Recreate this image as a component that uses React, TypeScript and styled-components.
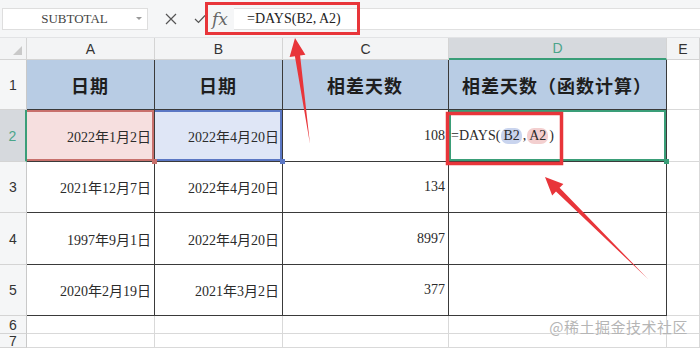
import styled, { createGlobalStyle, css } from 'styled-components'

const GlobalStyle = createGlobalStyle`
  html, body {
    margin: 0;
    padding: 0;
    background: #ffffff;
  }
  body {
    width: 700px;
    height: 348px;
    overflow: hidden;
    font-family: 'Liberation Serif', 'Noto Sans CJK SC', serif;
  }
`

const SERIF = `'Liberation Serif', 'Noto Sans CJK SC', serif`
const SANS = `'Liberation Sans', 'Noto Sans CJK SC', sans-serif`
const GREEN = '#3a9e78'
const DARK = '#3a3a3a'
const GRID = '#d9d9d9'

const Page = styled.div`
  position: relative;
  width: 700px;
  height: 348px;
  overflow: hidden;
`

const Toolbar = styled.div`
  height: 38px;
  box-sizing: border-box;
  display: flex;
  align-items: center;
  padding: 0 0 0 2px;
  background: #f5f6f7;
  border-bottom: 1px solid #e2e3e5;
`

const NameBox = styled.div`
  width: 146px;
  height: 22px;
  box-sizing: border-box;
  display: flex;
  align-items: center;
  background: #ffffff;
  border: 1px solid #dedede;
  font-family: ${SERIF};
  font-size: 13px;
  color: #444;
`

const NameText = styled.span`
  flex: 1;
  text-align: center;
  padding-left: 10px;
`

const Caret = styled.span`
  width: 0;
  height: 0;
  margin-right: 5px;
  border-left: 3px solid transparent;
  border-right: 3px solid transparent;
  border-top: 3px solid #999;
`

const ToolIcon = styled.span<{ $w: number }>`
  width: ${(p) => p.$w}px;
  display: flex;
  justify-content: center;
  align-items: center;
  color: #555;
`

const Fx = styled.span`
  width: 28px;
  text-align: center;
  font-family: 'DejaVu Serif', serif;
  font-style: italic;
  font-size: 17px;
  color: #666;
`

const FormulaInput = styled.div`
  flex: 1;
  height: 22px;
  box-sizing: border-box;
  display: flex;
  align-items: center;
  padding-left: 13px;
  background: #ffffff;
  border-top: 1px solid #e0e0e0;
  border-bottom: 1px solid #e0e0e0;
  font-family: ${SERIF};
  font-size: 14px;
  color: #222;
`

const Sheet = styled.div`
  display: grid;
  grid-template-columns: 27px 128px 128px 166px 218px 33px;
  grid-template-rows: 22px 50px 52px 51px 52px 51px 18px 14px;
`

const HeadCell = styled.div<{ $active?: boolean }>`
  box-sizing: border-box;
  display: flex;
  align-items: center;
  justify-content: center;
  background: ${(p) => (p.$active ? '#d6d9dd' : '#f3f4f5')};
  border-right: 1px solid #d4d4d4;
  border-bottom: ${(p) => (p.$active ? `2px solid ${GREEN}` : '1px solid #d4d4d4')};
  font-family: ${SANS};
  font-size: 14px;
  color: ${(p) => (p.$active ? '#4aa58a' : '#333')};
`

const Corner = styled(HeadCell)`
  position: relative;
  &::after {
    content: '';
    position: absolute;
    right: 4px;
    bottom: 4px;
    border-left: 9px solid transparent;
    border-bottom: 9px solid #c9c9c9;
  }
`

const RowHead = styled.div<{ $active?: boolean }>`
  box-sizing: border-box;
  display: flex;
  align-items: center;
  justify-content: center;
  background: ${(p) => (p.$active ? '#d6d9dd' : '#f5f6f7')};
  border-bottom: 1px solid #d4d4d4;
  border-right: ${(p) => (p.$active ? `2px solid ${GREEN}` : '1px solid #c9c9c9')};
  font-family: ${SANS};
  font-size: 14px;
  color: ${(p) => (p.$active ? '#4aa58a' : '#333')};
`

type Tone = 'plain' | 'header' | 'red' | 'blue' | 'active'

const toneStyles: Record<Tone, ReturnType<typeof css>> = {
  plain: css``,
  header: css`
    background: #b8cce4;
  `,
  red: css`
    background: #f6dfdf;
    box-shadow: inset 0 2px 0 #c8706c, inset 0 -2px 0 #c8706c, inset -2px 0 0 #c8706c;
  `,
  blue: css`
    background: #dfe6f6;
    box-shadow: inset 0 2px 0 #5b77c4, inset 0 -2px 0 #5b77c4, inset -2px 0 0 #5b77c4;
  `,
  active: css`
    box-shadow: inset 0 0 0 2px ${GREEN};
  `,
}

const handleColor: Partial<Record<Tone, string>> = {
  red: '#c8706c',
  blue: '#5b77c4',
  active: GREEN,
}

const Cell = styled.div<{ $tone?: Tone; $edge?: boolean; $align?: 'right' | 'center' | 'left' }>`
  position: relative;
  box-sizing: border-box;
  display: flex;
  align-items: center;
  justify-content: ${(p) =>
    p.$align === 'center' ? 'center' : p.$align === 'left' ? 'flex-start' : 'flex-end'};
  padding: 0 3px 0 2px;
  border-right: 1px solid ${(p) => (p.$edge ? DARK : GRID)};
  border-bottom: 1px solid ${(p) => (p.$edge ? DARK : GRID)};
  font-family: ${SERIF};
  font-size: 14px;
  color: #2b2b2b;
  white-space: nowrap;
  ${(p) => toneStyles[p.$tone ?? 'plain']}
  ${(p) =>
    p.$tone && handleColor[p.$tone]
      ? css`
          &::after {
            content: '';
            position: absolute;
            right: -3px;
            bottom: -3px;
            width: 5px;
            height: 5px;
            background: ${handleColor[p.$tone]};
            z-index: 2;
          }
        `
      : ''}
`

const HeaderText = styled.span`
  font-family: 'Noto Sans CJK SC', sans-serif;
  font-weight: 700;
  font-size: 18px;
  color: #1e1e1e;
  letter-spacing: 1px;
`

const Formula = styled.span`
  display: flex;
  align-items: center;
  gap: 1px;
`

const Ref = styled.span<{ $color: string }>`
  padding: 0 2px;
  border-radius: 7px;
  background: ${(p) => p.$color};
`

const Annotations = styled.svg`
  position: absolute;
  left: 0;
  top: 0;
  pointer-events: none;
`

const Watermark = styled.div`
  position: absolute;
  right: 12px;
  bottom: 11px;
  font-family: 'Noto Sans CJK SC', sans-serif;
  font-size: 15px;
  color: #b5b5b5;
  letter-spacing: 0.5px;
  text-shadow: 0 0 1px #fff;
`

function arrowPoints(tx: number, ty: number, hx: number, hy: number) {
  const dx = hx - tx
  const dy = hy - ty
  const len = Math.hypot(dx, dy)
  const ux = dx / len
  const uy = dy / len
  const nx = -uy
  const ny = ux
  const headLen = 18
  const headW = 8
  const shaftW = 2.6
  const bx = hx - ux * headLen
  const by = hy - uy * headLen
  const pts = [
    [tx, ty],
    [bx + nx * shaftW, by + ny * shaftW],
    [bx + nx * headW, by + ny * headW],
    [hx, hy],
    [bx - nx * headW, by - ny * headW],
    [bx - nx * shaftW, by - ny * shaftW],
  ]
  return pts.map((p) => p.map((v) => v.toFixed(1)).join(',')).join(' ')
}

const dates = [
  ['2021年12月7日', '2022年4月20日', '134'],
  ['1997年9月1日', '2022年4月20日', '8997'],
  ['2020年2月19日', '2021年3月2日', '377'],
]

export default function App() {
  return (
    <Page>
      <GlobalStyle />
      <Toolbar>
        <NameBox>
          <NameText>SUBTOTAL</NameText>
          <Caret />
        </NameBox>
        <ToolIcon $w={46}>
          <svg width="12" height="12" viewBox="0 0 12 12">
            <path d="M1 1 L11 11 M11 1 L1 11" stroke="#555" strokeWidth="1.2" />
          </svg>
        </ToolIcon>
        <ToolIcon $w={12}>
          <svg width="12" height="10" viewBox="0 0 12 10">
            <path d="M1 5 L4.5 8.5 L11 1.5" stroke="#555" strokeWidth="1.2" fill="none" />
          </svg>
        </ToolIcon>
        <Fx>fx</Fx>
        <FormulaInput>=DAYS(B2, A2)</FormulaInput>
      </Toolbar>

      <Sheet>
        <Corner />
        <HeadCell>A</HeadCell>
        <HeadCell>B</HeadCell>
        <HeadCell>C</HeadCell>
        <HeadCell $active>D</HeadCell>
        <HeadCell>E</HeadCell>

        <RowHead>1</RowHead>
        <Cell $tone="header" $edge $align="center"><HeaderText>日期</HeaderText></Cell>
        <Cell $tone="header" $edge $align="center"><HeaderText>日期</HeaderText></Cell>
        <Cell $tone="header" $edge $align="center"><HeaderText>相差天数</HeaderText></Cell>
        <Cell $tone="header" $edge $align="center"><HeaderText>相差天数（函数计算）</HeaderText></Cell>
        <Cell />

        <RowHead $active>2</RowHead>
        <Cell $tone="red" $edge>2022年1月2日</Cell>
        <Cell $tone="blue" $edge>2022年4月20日</Cell>
        <Cell $edge>108</Cell>
        <Cell $tone="active" $edge $align="left">
          <Formula>
            =DAYS(<Ref $color="#c9d4ee">B2</Ref>,<Ref $color="#f3cfcf">A2</Ref>)
          </Formula>
        </Cell>
        <Cell />

        {dates.map((row, i) => (
          <Row key={i} n={i + 3} a={row[0]} b={row[1]} c={row[2]} />
        ))}

        <RowHead>6</RowHead>
        <Cell /><Cell /><Cell /><Cell /><Cell />
        <RowHead>7</RowHead>
        <Cell /><Cell /><Cell /><Cell /><Cell />
      </Sheet>

      <Annotations width="700" height="348" viewBox="0 0 700 348">
        <rect x="206.5" y="3.5" width="152" height="30" fill="none" stroke="#e8353a" strokeWidth="3" />
        <rect x="447.5" y="113.5" width="114" height="50" fill="none" stroke="#e8353a" strokeWidth="3.5" />
        <polygon points={arrowPoints(310, 144, 295, 38)} fill="#e8353a" />
        <polygon points={arrowPoints(648, 279, 545, 177)} fill="#e8353a" />
      </Annotations>

      <Watermark>@稀土掘金技术社区</Watermark>
    </Page>
  )
}

function Row({ n, a, b, c }: { n: number; a: string; b: string; c: string }) {
  return (
    <>
      <RowHead>{n}</RowHead>
      <Cell $edge>{a}</Cell>
      <Cell $edge>{b}</Cell>
      <Cell $edge>{c}</Cell>
      <Cell $edge />
      <Cell />
    </>
  )
}
